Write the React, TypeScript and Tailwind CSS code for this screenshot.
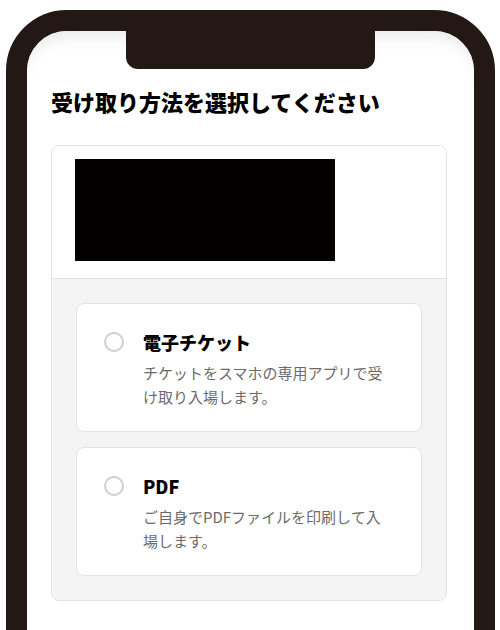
import React from "react";

function Option({ title, desc }: { title: string; desc: React.ReactNode }) {
  return (
    <div className="flex h-[129px] rounded-[8px] border border-[#e3e3e3] bg-white pl-[27px] pr-[20px] pt-[25px]">
      <div className="mt-[3px] h-[20px] w-[20px] shrink-0 rounded-full border-2 border-[#cfcfcf] bg-white" />
      <div className="ml-[19px] flex flex-col">
        <div className="text-[18px] font-black leading-[26px] text-black">{title}</div>
        <div className="mt-[6px] text-[15px] leading-[24px] text-[#6b6b6b]">{desc}</div>
      </div>
    </div>
  );
}

export default function App() {
  return (
    <div
      className="h-[630px] w-[500px] overflow-hidden bg-white"
      style={{ fontFamily: '"Noto Sans CJK JP", "Noto Sans", sans-serif' }}
    >
      <div className="ml-[6px] mt-[10px] h-[700px] w-[489px] rounded-[61px] border-[21px] border-[#231815]">
        <div className="relative h-full w-full overflow-hidden rounded-[40px] bg-white shadow-[inset_0_14px_18px_-10px_rgba(0,0,0,0.10)]">
          <div className="absolute left-[99px] top-0 h-[38px] w-[249px] rounded-b-[12px] bg-[#231815]" />
          <div className="pl-[24px] pt-[54px]">
            <h1 className="text-[22px] font-black leading-[33px] tracking-[0px] text-black">
              受け取り方法を選択してください
            </h1>
            <div className="mt-[27px] w-[396px] overflow-hidden rounded-[8px] border border-[#e3e3e3]">
              <div className="h-[132px] bg-white pl-[23px] pt-[13px]">
                <div className="h-[102px] w-[260px] bg-[#030000]" />
              </div>
              <div className="flex flex-col gap-[15px] border-t border-[#e3e3e3] bg-[#f4f4f4] px-[24px] py-[24px]">
                <Option
                  title="電子チケット"
                  desc={
                    <>
                      チケットをスマホの専用アプリで受
                      <br />
                      け取り入場します。
                    </>
                  }
                />
                <Option
                  title="PDF"
                  desc={
                    <>
                      ご自身でPDFファイルを印刷して入
                      <br />
                      場します。
                    </>
                  }
                />
              </div>
            </div>
          </div>
        </div>
      </div>
    </div>
  );
}
